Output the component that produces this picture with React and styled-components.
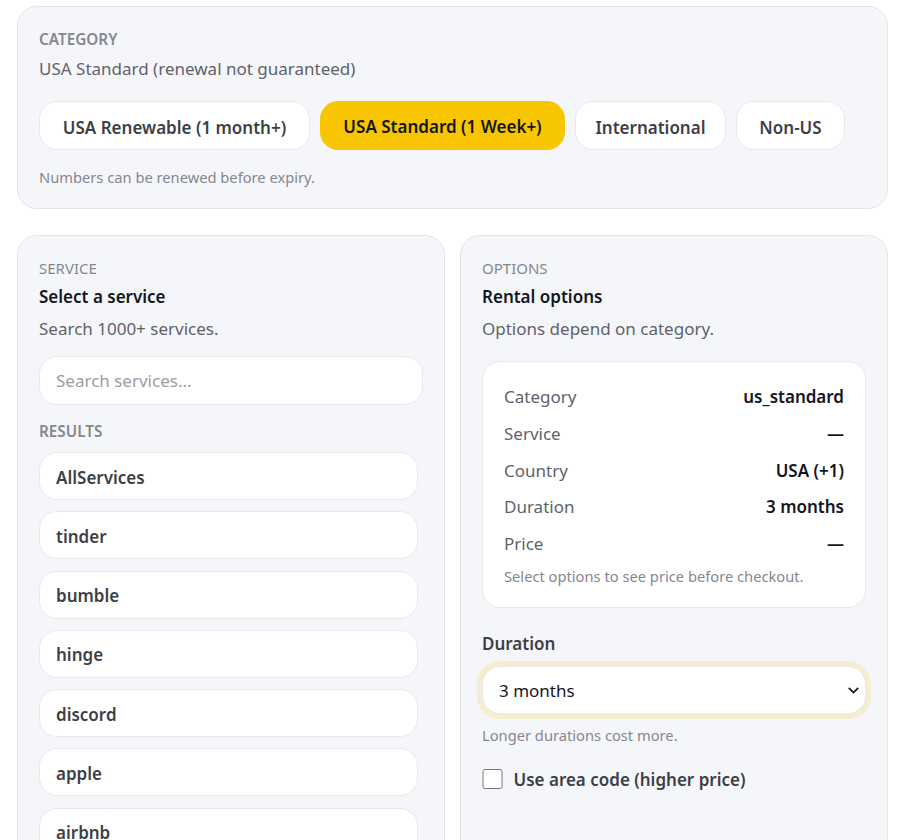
import React from 'react';
import styled, { createGlobalStyle } from 'styled-components';

const services = ['AllServices', 'tinder', 'bumble', 'hinge', 'discord', 'apple', 'airbnb'];

const summary = [
  ['Category', 'us_standard'],
  ['Service', '—'],
  ['Country', 'USA (+1)'],
  ['Duration', '3 months'],
  ['Price', '—'],
];

const categories = [
  { label: 'USA Renewable (1 month+)', width: 271 },
  { label: 'USA Standard (1 Week+)', width: 245, active: true },
  { label: 'International', width: 151 },
  { label: 'Non-US', width: 109 },
];

const App = () => {
  return (
    <Page>
      <GlobalStyle />
      <Card>
        <Eyebrow $bold>CATEGORY</Eyebrow>
        <CategoryName>USA Standard (renewal not guaranteed)</CategoryName>
        <ChipRow>
          {categories.map((c) => (
            <Chip key={c.label} $active={c.active} $width={c.width}>{c.label}</Chip>
          ))}
        </ChipRow>
        <Hint>Numbers can be renewed before expiry.</Hint>
      </Card>

      <Columns>
        <Panel>
          <Eyebrow>SERVICE</Eyebrow>
          <PanelTitle>Select a service</PanelTitle>
          <PanelSub>Search 1000+ services.</PanelSub>
          <SearchInput placeholder="Search services..." />
          <ResultsLabel $bold>RESULTS</ResultsLabel>
          <ResultList>
            {services.map((s) => (
              <ResultRow key={s}>{s}</ResultRow>
            ))}
          </ResultList>
        </Panel>

        <Panel>
          <Eyebrow>OPTIONS</Eyebrow>
          <PanelTitle>Rental options</PanelTitle>
          <PanelSub>Options depend on category.</PanelSub>
          <SummaryBox>
            {summary.map(([k, v]) => (
              <SummaryRow key={k}>
                <span>{k}</span>
                <strong>{v}</strong>
              </SummaryRow>
            ))}
            <SummaryNote>Select options to see price before checkout.</SummaryNote>
          </SummaryBox>
          <FieldLabel>Duration</FieldLabel>
          <SelectWrap>
            <DurationSelect defaultValue="3">
              <option value="1">1 month</option>
              <option value="3">3 months</option>
              <option value="6">6 months</option>
            </DurationSelect>
            <Chevron viewBox="0 0 11 7" aria-hidden="true">
              <polyline points="0.8,0.8 5.5,5.5 10.2,0.8" />
            </Chevron>
          </SelectWrap>
          <FieldHint>Longer durations cost more.</FieldHint>
          <CheckRow>
            <Checkbox type="checkbox" />
            <CheckText>Use area code (higher price)</CheckText>
          </CheckRow>
        </Panel>
      </Columns>
    </Page>
  );
};

export default App;

const GlobalStyle = createGlobalStyle`
  html, body {
    margin: 0;
    background: #ffffff;
    overflow: hidden;
  }
  body {
    font-family: "Noto Sans", "Open Sans", sans-serif;
    color: #14161f;
  }
  * {
    box-sizing: border-box;
  }
`;

const Page = styled.div`
  height: 840px;
  overflow: hidden;
  padding: 6px 18px 0 17px;
  display: flex;
  flex-direction: column;
  gap: 26px;
`;

const Card = styled.section`
  background: #f5f6fa;
  border: 1px solid #e2e4ea;
  border-radius: 20px;
  padding: 22px 21px 20px;
  height: 203px;
  flex: none;
`;

const Eyebrow = styled.div`
  font-size: ${(p) => (p.$bold ? '15.3px' : '15px')};
  line-height: 20px;
  font-weight: ${(p) => (p.$bold ? 600 : 400)};
  color: #85878f;
`;

const CategoryName = styled.div`
  font-size: 17px;
  line-height: 24px;
  margin-top: 8px;
  color: #5f626b;
`;

const ChipRow = styled.div`
  display: flex;
  gap: 10px;
  margin-top: 20px;
`;

const Chip = styled.button`
  width: ${(p) => p.$width}px;
  height: 49px;
  padding: ${(p) => (p.$active ? '2px' : '4px')} 0 0;
  border-radius: 18px;
  font-family: inherit;
  font-size: 17px;
  font-weight: 600;
  border: 1px solid ${(p) => (p.$active ? '#f7c600' : '#e8e9ee')};
  background: ${(p) => (p.$active ? '#f7c600' : '#ffffff')};
  color: ${(p) => (p.$active ? '#14161f' : '#3d3f47')};
`;

const Hint = styled.div`
  font-size: 14.7px;
  line-height: 20px;
  margin-top: 17px;
  color: #85878f;
`;

const Columns = styled.div`
  display: grid;
  grid-template-columns: 428px 428px;
  gap: 15px;
`;

const Panel = styled.section`
  background: #f5f6fa;
  border: 1px solid #e2e4ea;
  border-radius: 20px;
  padding: 22px 21px 40px;
  min-height: 640px;
`;

const PanelTitle = styled.div`
  font-size: 17px;
  line-height: 24px;
  font-weight: 600;
  margin-top: 7px;
  color: #14161f;
`;

const PanelSub = styled.div`
  font-size: 17px;
  line-height: 24px;
  margin-top: 8px;
  color: #5f626b;
`;

const SearchInput = styled.input`
  display: block;
  width: 100%;
  height: 49px;
  margin-top: 15px;
  padding: 0 16px;
  border: 1px solid #e8e9ee;
  border-radius: 18px;
  background: #ffffff;
  font-family: inherit;
  font-size: 17px;

  &::placeholder {
    color: #9a9ca5;
  }
`;

const ResultsLabel = styled(Eyebrow)`
  margin-top: 16px;
`;

const ResultList = styled.div`
  display: flex;
  flex-direction: column;
  gap: 11.3px;
  margin-top: 11px;
  padding-right: 5px;
`;

const ResultRow = styled.div`
  height: 48px;
  flex: none;
  display: flex;
  align-items: center;
  padding: 2px 16px 0;
  border: 1px solid #e8e9ee;
  border-radius: 18px;
  background: #ffffff;
  font-size: 17px;
  font-weight: 600;
  color: #3d3f47;
`;

const SummaryBox = styled.div`
  margin-top: 20px;
  padding: 16.2px 21px 21.4px;
  border: 1px solid #e8e9ee;
  border-radius: 18px;
  background: #ffffff;
  display: flex;
  flex-direction: column;
`;

const SummaryRow = styled.div`
  display: flex;
  justify-content: space-between;
  align-items: center;
  height: 36.8px;
  font-size: 17px;
  color: #5f626b;

  strong {
    font-weight: 600;
    color: #14161f;
  }
`;

const SummaryNote = styled.div`
  font-size: 14.7px;
  line-height: 20px;
  margin-top: 3.4px;
  color: #85878f;
`;

const FieldLabel = styled.div`
  font-size: 17px;
  line-height: 24px;
  font-weight: 600;
  margin-top: 24px;
  color: #3d3f47;
`;

const SelectWrap = styled.div`
  position: relative;
  margin-top: 10px;
`;

const DurationSelect = styled.select`
  display: block;
  width: 100%;
  height: 48px;
  padding: 2px 16px 0;
  appearance: none;
  border: 1px solid #e8e9ee;
  border-radius: 18px;
  background: #ffffff;
  box-shadow: 0 0 0 5px #f5edcd;
  font-family: inherit;
  font-size: 17px;
  color: #14161f;
  outline: none;
`;

const Chevron = styled.svg`
  position: absolute;
  right: 7px;
  top: 21px;
  width: 11px;
  height: 7px;
  fill: none;
  stroke: #14161f;
  stroke-width: 1.7;
  pointer-events: none;
`;

const FieldHint = styled.div`
  font-size: 14.7px;
  line-height: 20px;
  margin-top: 11px;
  color: #85878f;
`;

const CheckRow = styled.label`
  display: flex;
  align-items: center;
  gap: 11px;
  height: 24px;
  margin-top: 22px;
  font-size: 17px;
  font-weight: 600;
  color: #3d3f47;
`;

const CheckText = styled.span`
  padding-top: 2px;
`;

const Checkbox = styled.input`
  width: 20.5px;
  height: 20.5px;
  margin: 0;
`;
